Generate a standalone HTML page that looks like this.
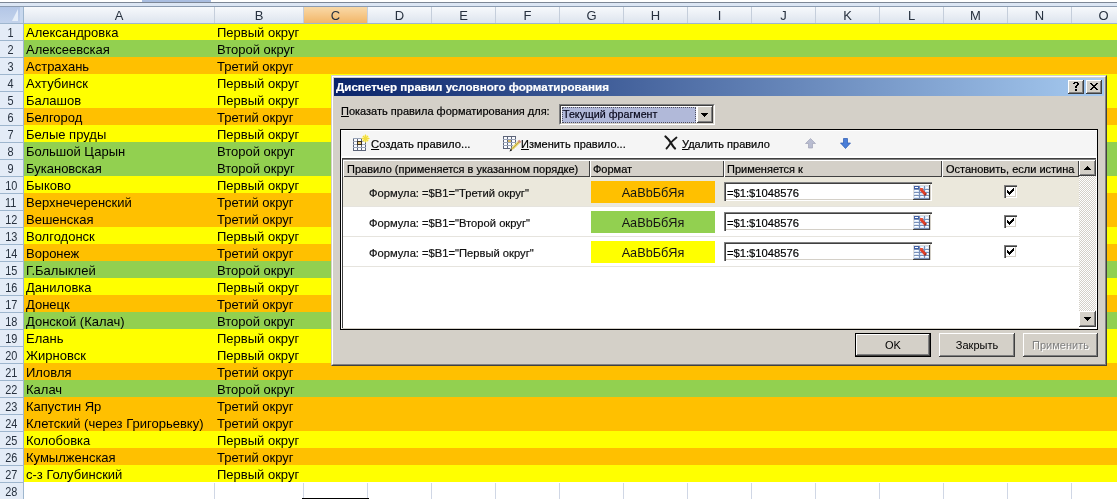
<!DOCTYPE html>
<html><head><meta charset="utf-8"><style>
*{margin:0;padding:0;box-sizing:border-box}
html,body{width:1117px;height:499px;overflow:hidden;background:#fff;font-family:"Liberation Sans",sans-serif;-webkit-font-smoothing:antialiased}
.d,.t,.ch,.rh,.hd span,.sw,.fld span,.btn{will-change:transform}
.d,.hd span,.fld span{-webkit-text-stroke:0.2px currentColor}
.a{position:absolute}
.ch{position:absolute;top:7px;height:16px;background:linear-gradient(#f7f9fc,#dde4ee);border-right:1px solid #c5cedb;color:#27313f;font-size:13px;line-height:18px;text-align:center;overflow:hidden}
.rh{position:absolute;left:0;width:23px;height:17px;background:#e4ecf7;border-bottom:1px solid #9eb6ce;color:#27313f;font-size:13px;line-height:17px;text-align:center}
.rh b{display:inline-block;font-weight:normal;transform:scaleX(0.84);margin-left:-1px}
.row{position:absolute;left:24px;width:1093px;height:17px}
.t{position:absolute;top:0;font-size:13px;line-height:17px;color:#000;white-space:nowrap}
.gl{position:absolute;top:483px;width:1px;height:16px;background:#d0d7e5}
.d{position:absolute;white-space:nowrap;font-size:11px;color:#000}
.btn{background:#d4d0c8;box-shadow:inset -1px -1px #404040,inset 1px 1px #fff,inset -2px -2px #808080,inset 2px 2px #d4d0c8;font-size:11px;color:#000}
.hd{position:absolute;top:160px;height:17px;background:#d4d0c8;box-shadow:inset 1px 1px #fff,inset -1px -1px #404040;font-size:11px}
.hd span{position:absolute;top:2px;line-height:15px;white-space:nowrap}
.sw{position:absolute;left:591px;width:124px;height:22px;font-size:12.7px;line-height:24px;text-align:center;color:#141414}
.fld{position:absolute;left:724px;width:208px;height:19px;background:#fff;box-shadow:inset 1px 1px #808080,inset 2px 2px #404040,inset -1px -1px #fff,inset -2px -2px #d4d0c8}
.fld span{position:absolute;left:3px;top:4px;line-height:15px;font-size:11.2px;color:#000;white-space:nowrap}
.fld svg{position:absolute;left:189px;top:3px}
.cb{position:absolute;left:1004px;width:13px;height:13px;background:#fff;box-shadow:inset 1px 1px #808080,inset 2px 2px #404040,inset -1px -1px #fff,inset -2px -2px #d4d0c8}
.cb svg{position:absolute;left:3px;top:3px}
</style></head><body>

<div class="a" style="left:0;top:0;width:1117px;height:2px;background:#fff"></div>
<div class="a" style="left:142px;top:0;width:69px;height:2px;background:#a9bde0"></div>
<div class="a" style="left:0;top:2px;width:1117px;height:1px;background:#7d8796"></div>
<div class="a" style="left:0;top:3px;width:1117px;height:3px;background:#dce6f4"></div>
<div class="a" style="left:0;top:6px;width:1117px;height:1px;background:#8b9bb0"></div>
<div class="a" style="left:0;top:7px;width:24px;height:17px;background:linear-gradient(#b3c6e6,#c3d3ec);border-right:1px solid #9eb6ce;border-bottom:1px solid #9eb6ce"></div>
<svg class="a" style="left:10px;top:8px" width="10" height="14"><path d="M8 1V13H2z" fill="#e6eef9"/></svg>
<div class="a" style="left:20px;top:7px;width:3px;height:16px;background:#c8d8ee"></div>
<div class="ch" style="left:24px;width:191px;">A</div>
<div class="ch" style="left:215px;width:89px;">B</div>
<div class="ch" style="left:304px;width:64px;background:linear-gradient(#f9d9a8,#f2b668);">C</div>
<div class="ch" style="left:368px;width:64px;">D</div>
<div class="ch" style="left:432px;width:64px;">E</div>
<div class="ch" style="left:496px;width:64px;">F</div>
<div class="ch" style="left:560px;width:64px;">G</div>
<div class="ch" style="left:624px;width:64px;">H</div>
<div class="ch" style="left:688px;width:64px;">I</div>
<div class="ch" style="left:752px;width:64px;">J</div>
<div class="ch" style="left:816px;width:64px;">K</div>
<div class="ch" style="left:880px;width:64px;">L</div>
<div class="ch" style="left:944px;width:64px;">M</div>
<div class="ch" style="left:1008px;width:64px;">N</div>
<div class="ch" style="left:1072px;width:64px;">O</div>
<div class="a" style="left:24px;top:23px;width:1093px;height:1px;background:#9eb6ce"></div>
<div class="rh" style="top:24px"><b>1</b></div>
<div class="row" style="top:24px;height:16px;background:#ffff00"><span class="t" style="left:2px;top:0px">Александровка</span><span class="t" style="left:193px;top:0px">Первый округ</span></div>
<div class="rh" style="top:41px"><b>2</b></div>
<div class="row" style="top:40px;height:17px;background:#92d050"><span class="t" style="left:2px;top:1px">Алексеевская</span><span class="t" style="left:193px;top:1px">Второй округ</span></div>
<div class="rh" style="top:58px"><b>3</b></div>
<div class="row" style="top:57px;height:17px;background:#ffc000"><span class="t" style="left:2px;top:1px">Астрахань</span><span class="t" style="left:193px;top:1px">Третий округ</span></div>
<div class="rh" style="top:75px"><b>4</b></div>
<div class="row" style="top:74px;height:17px;background:#ffff00"><span class="t" style="left:2px;top:1px">Ахтубинск</span><span class="t" style="left:193px;top:1px">Первый округ</span></div>
<div class="rh" style="top:92px"><b>5</b></div>
<div class="row" style="top:91px;height:17px;background:#ffff00"><span class="t" style="left:2px;top:1px">Балашов</span><span class="t" style="left:193px;top:1px">Первый округ</span></div>
<div class="rh" style="top:109px"><b>6</b></div>
<div class="row" style="top:108px;height:17px;background:#ffc000"><span class="t" style="left:2px;top:1px">Белгород</span><span class="t" style="left:193px;top:1px">Третий округ</span></div>
<div class="rh" style="top:126px"><b>7</b></div>
<div class="row" style="top:125px;height:17px;background:#ffff00"><span class="t" style="left:2px;top:1px">Белые пруды</span><span class="t" style="left:193px;top:1px">Первый округ</span></div>
<div class="rh" style="top:143px"><b>8</b></div>
<div class="row" style="top:142px;height:17px;background:#92d050"><span class="t" style="left:2px;top:1px">Большой Царын</span><span class="t" style="left:193px;top:1px">Второй округ</span></div>
<div class="rh" style="top:160px"><b>9</b></div>
<div class="row" style="top:159px;height:17px;background:#92d050"><span class="t" style="left:2px;top:1px">Букановская</span><span class="t" style="left:193px;top:1px">Второй округ</span></div>
<div class="rh" style="top:177px"><b>10</b></div>
<div class="row" style="top:176px;height:17px;background:#ffff00"><span class="t" style="left:2px;top:1px">Быково</span><span class="t" style="left:193px;top:1px">Первый округ</span></div>
<div class="rh" style="top:194px"><b>11</b></div>
<div class="row" style="top:193px;height:17px;background:#ffc000"><span class="t" style="left:2px;top:1px">Верхнечеренский</span><span class="t" style="left:193px;top:1px">Третий округ</span></div>
<div class="rh" style="top:211px"><b>12</b></div>
<div class="row" style="top:210px;height:17px;background:#ffc000"><span class="t" style="left:2px;top:1px">Вешенская</span><span class="t" style="left:193px;top:1px">Третий округ</span></div>
<div class="rh" style="top:228px"><b>13</b></div>
<div class="row" style="top:227px;height:17px;background:#ffff00"><span class="t" style="left:2px;top:1px">Волгодонск</span><span class="t" style="left:193px;top:1px">Первый округ</span></div>
<div class="rh" style="top:245px"><b>14</b></div>
<div class="row" style="top:244px;height:17px;background:#ffc000"><span class="t" style="left:2px;top:1px">Воронеж</span><span class="t" style="left:193px;top:1px">Третий округ</span></div>
<div class="rh" style="top:262px"><b>15</b></div>
<div class="row" style="top:261px;height:17px;background:#92d050"><span class="t" style="left:2px;top:1px">Г.Балыклей</span><span class="t" style="left:193px;top:1px">Второй округ</span></div>
<div class="rh" style="top:279px"><b>16</b></div>
<div class="row" style="top:278px;height:17px;background:#ffff00"><span class="t" style="left:2px;top:1px">Даниловка</span><span class="t" style="left:193px;top:1px">Первый округ</span></div>
<div class="rh" style="top:296px"><b>17</b></div>
<div class="row" style="top:295px;height:17px;background:#ffc000"><span class="t" style="left:2px;top:1px">Донецк</span><span class="t" style="left:193px;top:1px">Третий округ</span></div>
<div class="rh" style="top:313px"><b>18</b></div>
<div class="row" style="top:312px;height:17px;background:#92d050"><span class="t" style="left:2px;top:1px">Донской (Калач)</span><span class="t" style="left:193px;top:1px">Второй округ</span></div>
<div class="rh" style="top:330px"><b>19</b></div>
<div class="row" style="top:329px;height:17px;background:#ffff00"><span class="t" style="left:2px;top:1px">Елань</span><span class="t" style="left:193px;top:1px">Первый округ</span></div>
<div class="rh" style="top:347px"><b>20</b></div>
<div class="row" style="top:346px;height:17px;background:#ffff00"><span class="t" style="left:2px;top:1px">Жирновск</span><span class="t" style="left:193px;top:1px">Первый округ</span></div>
<div class="rh" style="top:364px"><b>21</b></div>
<div class="row" style="top:363px;height:17px;background:#ffc000"><span class="t" style="left:2px;top:1px">Иловля</span><span class="t" style="left:193px;top:1px">Третий округ</span></div>
<div class="rh" style="top:381px"><b>22</b></div>
<div class="row" style="top:380px;height:17px;background:#92d050"><span class="t" style="left:2px;top:1px">Калач</span><span class="t" style="left:193px;top:1px">Второй округ</span></div>
<div class="rh" style="top:398px"><b>23</b></div>
<div class="row" style="top:397px;height:17px;background:#ffc000"><span class="t" style="left:2px;top:1px">Капустин Яр</span><span class="t" style="left:193px;top:1px">Третий округ</span></div>
<div class="rh" style="top:415px"><b>24</b></div>
<div class="row" style="top:414px;height:17px;background:#ffc000"><span class="t" style="left:2px;top:1px">Клетский (через Григорьевку)</span><span class="t" style="left:193px;top:1px">Третий округ</span></div>
<div class="rh" style="top:432px"><b>25</b></div>
<div class="row" style="top:431px;height:17px;background:#ffff00"><span class="t" style="left:2px;top:1px">Колобовка</span><span class="t" style="left:193px;top:1px">Первый округ</span></div>
<div class="rh" style="top:449px"><b>26</b></div>
<div class="row" style="top:448px;height:17px;background:#ffc000"><span class="t" style="left:2px;top:1px">Кумылженская</span><span class="t" style="left:193px;top:1px">Третий округ</span></div>
<div class="rh" style="top:466px"><b>27</b></div>
<div class="row" style="top:465px;height:17px;background:#ffff00"><span class="t" style="left:2px;top:1px">с-з Голубинский</span><span class="t" style="left:193px;top:1px">Первый округ</span></div>
<div class="rh" style="top:483px;border-bottom:none"><b>28</b></div>
<div class="a" style="left:23px;top:7px;width:1px;height:492px;background:#9eb6ce"></div>
<div class="gl" style="left:214px"></div>
<div class="gl" style="left:303px"></div>
<div class="gl" style="left:367px"></div>
<div class="gl" style="left:431px"></div>
<div class="gl" style="left:495px"></div>
<div class="gl" style="left:559px"></div>
<div class="gl" style="left:623px"></div>
<div class="gl" style="left:687px"></div>
<div class="gl" style="left:751px"></div>
<div class="gl" style="left:815px"></div>
<div class="gl" style="left:879px"></div>
<div class="gl" style="left:943px"></div>
<div class="gl" style="left:1007px"></div>
<div class="gl" style="left:1071px"></div>
<div class="gl" style="left:1135px"></div>
<div class="a" style="left:302px;top:498px;width:67px;height:1px;background:#000"></div>
<div class="a" style="left:331px;top:75px;width:776px;height:291px;background:#d4d0c8;border-top:1px solid #d4d0c8;border-left:1px solid #d4d0c8;border-right:1px solid #404040;border-bottom:1px solid #404040"></div>
<div class="a" style="left:332px;top:76px;width:774px;height:289px;border-top:1px solid #fff;border-left:1px solid #fff;border-right:1px solid #808080;border-bottom:1px solid #808080"></div>
<div class="a" style="left:334px;top:78px;width:770px;height:18px;background:linear-gradient(90deg,#0a246a,#a6caf0)"></div>
<div class="d" style="left:336px;top:78px;line-height:18px;font-size:11.6px;font-weight:bold;color:#fff">Диспетчер правил условного форматирования</div>
<div class="a btn" style="left:1068px;top:80px;width:16px;height:14px"><svg width="6" height="9" shape-rendering="crispEdges" style="position:absolute;left:5px;top:2px"><path d="M1 0h1v1h-1zM2 0h1v1h-1zM3 0h1v1h-1zM4 0h1v1h-1zM0 1h1v1h-1zM1 1h1v1h-1zM4 1h1v1h-1zM5 1h1v1h-1zM4 2h1v1h-1zM5 2h1v1h-1zM3 3h1v1h-1zM4 3h1v1h-1zM2 4h1v1h-1zM3 4h1v1h-1zM2 5h1v1h-1zM3 5h1v1h-1zM2 7h1v1h-1zM3 7h1v1h-1zM2 8h1v1h-1zM3 8h1v1h-1z" fill="#000"/></svg></div>
<div class="a btn" style="left:1086px;top:80px;width:16px;height:14px"><svg width="8" height="7" shape-rendering="crispEdges" style="position:absolute;left:4px;top:3px"><path d="M0 0h1v1h-1zM1 0h1v1h-1zM6 0h1v1h-1zM7 0h1v1h-1zM1 1h1v1h-1zM2 1h1v1h-1zM5 1h1v1h-1zM6 1h1v1h-1zM2 2h1v1h-1zM3 2h1v1h-1zM4 2h1v1h-1zM5 2h1v1h-1zM3 3h1v1h-1zM4 3h1v1h-1zM2 4h1v1h-1zM3 4h1v1h-1zM4 4h1v1h-1zM5 4h1v1h-1zM1 5h1v1h-1zM2 5h1v1h-1zM5 5h1v1h-1zM6 5h1v1h-1zM0 6h1v1h-1zM1 6h1v1h-1zM6 6h1v1h-1zM7 6h1v1h-1z" fill="#000"/></svg></div>

<div class="d" style="left:341px;top:104px;line-height:14px"><u>П</u>оказать правила форматирования для:</div>
<div class="a" style="left:559px;top:104px;width:156px;height:21px;background:#fff;border-top:1px solid #808080;border-left:1px solid #808080;border-right:1px solid #fff;border-bottom:1px solid #fff"></div>
<div class="a" style="left:560px;top:105px;width:154px;height:19px;border-top:1px solid #404040;border-left:1px solid #404040;border-right:1px solid #d4d0c8;border-bottom:1px solid #d4d0c8"></div>
<div class="a" style="left:562px;top:107px;width:134px;height:16px;background:#b1b9d9;outline:1px dotted #505060;outline-offset:-1px"></div>
<div class="d" style="left:563px;top:106px;line-height:16px;font-size:10.7px;color:#08081a">Текущий фрагмент</div>
<div class="a btn" style="left:697px;top:106px;width:16px;height:17px"><svg width="7" height="4" shape-rendering="crispEdges" style="position:absolute;left:4px;top:7px"><path d="M0 0h7v1h-7zM1 1h5v1h-5zM2 2h3v1h-3zM3 3h1v1h-1z" fill="#000"/></svg></div>

<div class="a" style="left:340px;top:129px;width:758px;height:201px;background:#fff;border:1px solid #000"></div>
<div class="a" style="left:341px;top:131px;width:756px;height:25px;background:#f5f5f5"></div>
<div class="a" style="left:342px;top:158px;width:1px;height:170px;background:#404040"></div>
<div class="a" style="left:342px;top:158px;width:754px;height:1px;background:#404040"></div><div class="a" style="left:343px;top:159px;width:753px;height:1px;background:#808080"></div>
<div class="a" style="left:342px;top:328px;width:737px;height:1px;background:#d4d0c8"></div>

<!-- toolbar -->
<svg class="a" style="left:353px;top:134px" width="18" height="18">
<rect x="0" y="4" width="13" height="13" fill="#fbfcff"/>
<g fill="#5c6478" shape-rendering="crispEdges"><rect x="0" y="4" width="1" height="13"/><rect x="4" y="4" width="1" height="13"/><rect x="8" y="4" width="1" height="13"/><rect x="12" y="7" width="1" height="10"/><rect x="0" y="16" width="13" height="1"/></g>
<g fill="#9aa4b8" shape-rendering="crispEdges"><rect x="0" y="4" width="10" height="1"/><rect x="0" y="7" width="13" height="1"/><rect x="0" y="10" width="13" height="1"/><rect x="0" y="13" width="13" height="1"/></g>
<rect x="4" y="7" width="5" height="4" fill="#3a3020" shape-rendering="crispEdges"/><rect x="5" y="8" width="3" height="2" fill="#e8c878" shape-rendering="crispEdges"/>
<circle cx="12.5" cy="4.5" r="3.5" fill="#fff8a0"/>
<path d="M12.5 0.5v8M8.5 4.5h8M10 2l5 5M15 2l-5 5" stroke="#f2dc40" stroke-width="1.2"/>
</svg>
<div class="d" style="left:371px;top:137px;line-height:14px;font-size:11.3px"><u>С</u>оздать правило...</div>
<svg class="a" style="left:503px;top:134px" width="19" height="19">
<rect x="0" y="2" width="13" height="13" fill="#fbfcff"/>
<g fill="#5c6478" shape-rendering="crispEdges"><rect x="0" y="2" width="1" height="13"/><rect x="4" y="2" width="1" height="13"/><rect x="8" y="2" width="1" height="13"/><rect x="12" y="2" width="1" height="9"/><rect x="0" y="14" width="7" height="1"/><rect x="0" y="2" width="13" height="1"/></g>
<g fill="#9aa4b8" shape-rendering="crispEdges"><rect x="0" y="5" width="13" height="1"/><rect x="0" y="8" width="13" height="1"/><rect x="0" y="11" width="10" height="1"/></g>
<rect x="5" y="6" width="3" height="2" fill="#d8b860" shape-rendering="crispEdges"/>
<path d="M7.5 16.5L9 13L16 6L18 8L11 15z" fill="#e8d468"/>
<path d="M15.5 6.5L17.5 8.5" stroke="#d89090" stroke-width="2.4"/>
<path d="M6.5 17.5L9 16.5L8 14z" fill="#181818"/>
<path d="M9.5 14.5L16.5 7.5" stroke="#b09840" stroke-width="0.8"/>
</svg>
<div class="d" style="left:521px;top:137px;line-height:14px;font-size:11px"><u>И</u>зменить правило...</div>
<svg class="a" style="left:664px;top:135px" width="14" height="15" viewBox="0 0 14 15"><path d="M1.5 1.5Q5 4.5 7 8T11 13.5" fill="none" stroke="#1a1a1a" stroke-width="2.2" stroke-linecap="round"/><path d="M12.5 2.5Q8 6 6 9T2.5 13.5" fill="none" stroke="#1a1a1a" stroke-width="1.8" stroke-linecap="round"/></svg>
<div class="d" style="left:682px;top:137px;line-height:14px;font-size:11px"><u>У</u>далить правило</div>
<svg class="a" style="left:805px;top:138px" width="11" height="11" viewBox="0 0 11 11"><path d="M5.5 0.5L10.5 5.5H7.5V10H3.5V5.5H0.5z" fill="#b8bcd0" stroke="#a0a4b8" stroke-width="0.7"/></svg>
<svg class="a" style="left:840px;top:138px" width="11" height="11" viewBox="0 0 11 11"><path d="M3.5 0.5H7.5V5H10.5L5.5 10.5L0.5 5H3.5z" fill="#4a7ed8" stroke="#2858b0" stroke-width="0.7"/></svg>

<!-- header -->
<div class="hd" style="left:343px;width:247px"><span style="left:4px">Правило (применяется в указанном порядке)</span></div>
<div class="hd" style="left:590px;width:134px"><span style="left:3px">Формат</span></div>
<div class="hd" style="left:724px;width:218px"><span style="left:3px">Применяется к</span></div>
<div class="hd" style="left:942px;width:137px"><span style="left:4px">Остановить, если истина</span></div>

<!-- scrollbar -->
<div class="a" style="left:1079px;top:176px;width:17px;height:135px;background-color:#ebe9e4;background-image:repeating-conic-gradient(#fff 0 25%,#d4d0c8 0 50%);background-size:2px 2px"></div>
<div class="a btn" style="left:1079px;top:160px;width:17px;height:16px"><svg width="7" height="4" shape-rendering="crispEdges" style="position:absolute;left:5px;top:6px"><path d="M3 0h1v1h-1zM2 1h3v1h-3zM1 2h5v1h-5zM0 3h7v1h-7z" fill="#000"/></svg></div>
<div class="a btn" style="left:1079px;top:311px;width:17px;height:16px"><svg width="7" height="4" shape-rendering="crispEdges" style="position:absolute;left:5px;top:6px"><path d="M0 0h7v1h-7zM1 1h5v1h-5zM2 2h3v1h-3zM3 3h1v1h-1z" fill="#000"/></svg></div>

<!-- rows -->
<div class="a" style="left:343px;top:177px;width:736px;height:29px;background:#ebe8dc"></div>
<div class="a" style="left:343px;top:206px;width:736px;height:1px;background:#e6e4de"></div>
<div class="a" style="left:343px;top:236px;width:736px;height:1px;background:#e6e4de"></div>
<div class="a" style="left:343px;top:266px;width:736px;height:1px;background:#e6e4de"></div>

<div class="d" style="left:369px;top:186px;line-height:14px;font-size:11.2px;color:#101010">Формула: =$B1="Третий округ"</div>
<div class="d" style="left:369px;top:216px;line-height:14px;font-size:11.2px;color:#101010">Формула: =$B1="Второй округ"</div>
<div class="d" style="left:369px;top:246px;line-height:14px;font-size:11.2px;color:#101010">Формула: =$B1="Первый округ"</div>

<div class="sw" style="top:181px;background:#ffc000">AaBbБбЯя</div>
<div class="sw" style="top:211px;background:#92d050">AaBbБбЯя</div>
<div class="sw" style="top:241px;background:#ffff00">AaBbБбЯя</div>

<div class="fld" style="top:182px"><span>=$1:$1048576</span><svg width="17" height="15" viewBox="0 0 17 15"><rect x="0" y="0" width="17" height="15" fill="#dcdcdc"/><rect x="1" y="1" width="15" height="13" fill="#d8e6f8"/><g fill="#7a90b8" shape-rendering="crispEdges"><rect x="1" y="4" width="15" height="1"/><rect x="1" y="7" width="15" height="1"/><rect x="1" y="10" width="15" height="1"/><rect x="1" y="13" width="15" height="1"/><rect x="6" y="1" width="1" height="13"/><rect x="11" y="1" width="1" height="13"/></g><rect x="1" y="1" width="5" height="3" fill="#4060a8" shape-rendering="crispEdges"/><g fill="#fff" shape-rendering="crispEdges"><rect x="2" y="2" width="3" height="1"/><rect x="8" y="2" width="2" height="1"/><rect x="13" y="2" width="2" height="1"/><rect x="2" y="5" width="3" height="1"/><rect x="13" y="5" width="2" height="1"/><rect x="2" y="8" width="3" height="1"/><rect x="13" y="8" width="2" height="1"/><rect x="2" y="11" width="3" height="1"/><rect x="8" y="11" width="2" height="1"/><rect x="13" y="11" width="2" height="1"/></g><path d="M8 4.5L12.5 9.5" stroke="#e04028" stroke-width="2.8"/><path d="M7 3h3.5l-3.5 3.5z" fill="#e85038"/><path d="M11.5 10.5L13.5 8.5" stroke="#a02818" stroke-width="1.2"/><g fill="#404040" shape-rendering="crispEdges"><rect x="16" y="0" width="1" height="15"/><rect x="0" y="14" width="17" height="1"/></g></svg></div>
<div class="fld" style="top:212px"><span>=$1:$1048576</span><svg width="17" height="15" viewBox="0 0 17 15"><rect x="0" y="0" width="17" height="15" fill="#dcdcdc"/><rect x="1" y="1" width="15" height="13" fill="#d8e6f8"/><g fill="#7a90b8" shape-rendering="crispEdges"><rect x="1" y="4" width="15" height="1"/><rect x="1" y="7" width="15" height="1"/><rect x="1" y="10" width="15" height="1"/><rect x="1" y="13" width="15" height="1"/><rect x="6" y="1" width="1" height="13"/><rect x="11" y="1" width="1" height="13"/></g><rect x="1" y="1" width="5" height="3" fill="#4060a8" shape-rendering="crispEdges"/><g fill="#fff" shape-rendering="crispEdges"><rect x="2" y="2" width="3" height="1"/><rect x="8" y="2" width="2" height="1"/><rect x="13" y="2" width="2" height="1"/><rect x="2" y="5" width="3" height="1"/><rect x="13" y="5" width="2" height="1"/><rect x="2" y="8" width="3" height="1"/><rect x="13" y="8" width="2" height="1"/><rect x="2" y="11" width="3" height="1"/><rect x="8" y="11" width="2" height="1"/><rect x="13" y="11" width="2" height="1"/></g><path d="M8 4.5L12.5 9.5" stroke="#e04028" stroke-width="2.8"/><path d="M7 3h3.5l-3.5 3.5z" fill="#e85038"/><path d="M11.5 10.5L13.5 8.5" stroke="#a02818" stroke-width="1.2"/><g fill="#404040" shape-rendering="crispEdges"><rect x="16" y="0" width="1" height="15"/><rect x="0" y="14" width="17" height="1"/></g></svg></div>
<div class="fld" style="top:242px"><span>=$1:$1048576</span><svg width="17" height="15" viewBox="0 0 17 15"><rect x="0" y="0" width="17" height="15" fill="#dcdcdc"/><rect x="1" y="1" width="15" height="13" fill="#d8e6f8"/><g fill="#7a90b8" shape-rendering="crispEdges"><rect x="1" y="4" width="15" height="1"/><rect x="1" y="7" width="15" height="1"/><rect x="1" y="10" width="15" height="1"/><rect x="1" y="13" width="15" height="1"/><rect x="6" y="1" width="1" height="13"/><rect x="11" y="1" width="1" height="13"/></g><rect x="1" y="1" width="5" height="3" fill="#4060a8" shape-rendering="crispEdges"/><g fill="#fff" shape-rendering="crispEdges"><rect x="2" y="2" width="3" height="1"/><rect x="8" y="2" width="2" height="1"/><rect x="13" y="2" width="2" height="1"/><rect x="2" y="5" width="3" height="1"/><rect x="13" y="5" width="2" height="1"/><rect x="2" y="8" width="3" height="1"/><rect x="13" y="8" width="2" height="1"/><rect x="2" y="11" width="3" height="1"/><rect x="8" y="11" width="2" height="1"/><rect x="13" y="11" width="2" height="1"/></g><path d="M8 4.5L12.5 9.5" stroke="#e04028" stroke-width="2.8"/><path d="M7 3h3.5l-3.5 3.5z" fill="#e85038"/><path d="M11.5 10.5L13.5 8.5" stroke="#a02818" stroke-width="1.2"/><g fill="#404040" shape-rendering="crispEdges"><rect x="16" y="0" width="1" height="15"/><rect x="0" y="14" width="17" height="1"/></g></svg></div>

<div class="cb" style="top:185px"><svg width="7" height="7" shape-rendering="crispEdges"><path d="M6 0h1v3h-1zM5 1h1v3h-1zM4 2h1v3h-1zM3 3h1v3h-1zM2 4h1v3h-1zM1 3h1v3h-1zM0 2h1v3h-1z" fill="#000"/></svg></div>
<div class="cb" style="top:215px"><svg width="7" height="7" shape-rendering="crispEdges"><path d="M6 0h1v3h-1zM5 1h1v3h-1zM4 2h1v3h-1zM3 3h1v3h-1zM2 4h1v3h-1zM1 3h1v3h-1zM0 2h1v3h-1z" fill="#000"/></svg></div>
<div class="cb" style="top:245px"><svg width="7" height="7" shape-rendering="crispEdges"><path d="M6 0h1v3h-1zM5 1h1v3h-1zM4 2h1v3h-1zM3 3h1v3h-1zM2 4h1v3h-1zM1 3h1v3h-1zM0 2h1v3h-1z" fill="#000"/></svg></div>

<!-- bottom buttons -->
<div class="a" style="left:855px;top:333px;width:76px;height:24px;border:1px solid #000"></div>
<div class="a btn" style="left:856px;top:334px;width:74px;height:22px;line-height:22px;text-align:center">OK</div>
<div class="a btn" style="left:939px;top:333px;width:76px;height:24px;line-height:24px;text-align:center">Закрыть</div>
<div class="a btn" style="left:1023px;top:333px;width:75px;height:24px;line-height:24px;text-align:center;color:#808080;text-shadow:1px 1px 0 #fff">Применить</div>

</body></html>
